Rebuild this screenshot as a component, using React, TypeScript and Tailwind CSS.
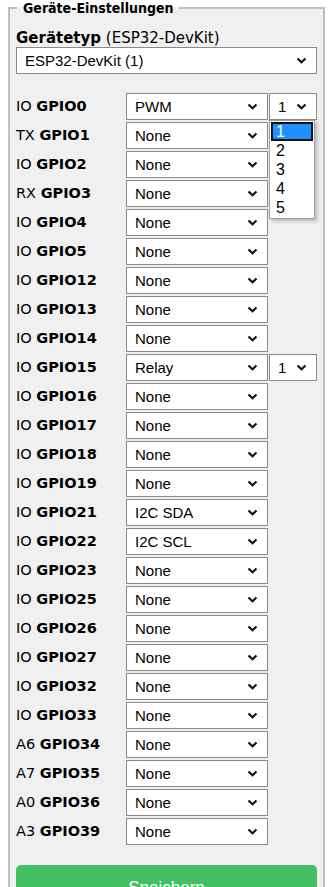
import React from "react";

const pins: [string, string, string, string?][] = [
  ["IO", "GPIO0", "PWM", "1"],
  ["TX", "GPIO1", "None"],
  ["IO", "GPIO2", "None"],
  ["RX", "GPIO3", "None"],
  ["IO", "GPIO4", "None"],
  ["IO", "GPIO5", "None"],
  ["IO", "GPIO12", "None"],
  ["IO", "GPIO13", "None"],
  ["IO", "GPIO14", "None"],
  ["IO", "GPIO15", "Relay", "1"],
  ["IO", "GPIO16", "None"],
  ["IO", "GPIO17", "None"],
  ["IO", "GPIO18", "None"],
  ["IO", "GPIO19", "None"],
  ["IO", "GPIO21", "I2C SDA"],
  ["IO", "GPIO22", "I2C SCL"],
  ["IO", "GPIO23", "None"],
  ["IO", "GPIO25", "None"],
  ["IO", "GPIO26", "None"],
  ["IO", "GPIO27", "None"],
  ["IO", "GPIO32", "None"],
  ["IO", "GPIO33", "None"],
  ["A6", "GPIO34", "None"],
  ["A7", "GPIO35", "None"],
  ["A0", "GPIO36", "None"],
  ["A3", "GPIO39", "None"],
];

function Chevron() {
  return (
    <svg width="11" height="7" viewBox="0 0 11 7" className="shrink-0">
      <path d="M1.5 1.5 L5.5 5.2 L9.5 1.5" fill="none" stroke="#111" strokeWidth="2.2" />
    </svg>
  );
}

function FakeSelect({ value, className }: { value: string; className: string }) {
  return (
    <div
      className={`flex h-[27px] items-center justify-between border border-[#8a8a8a] bg-white pl-[8px] pr-[9px] text-[15px] text-black font-['Liberation_Sans',sans-serif] ${className}`}
    >
      <span className="leading-none">{value}</span>
      <Chevron />
    </div>
  );
}

export default function App() {
  return (
    <div className="relative min-h-[887px] bg-white font-['Verdana','DejaVu_Sans',sans-serif]">
      <fieldset className="mx-[8px] border-2 border-[#c0c0c0] bg-[#f0f0f0] px-[6px] pb-[20px] pt-[14px]">
        <legend className="ml-[1px] px-[6px] text-[14px] font-bold leading-[16px] text-black font-['Tahoma','DejaVu_Sans_Condensed',sans-serif]">
          Geräte-Einstellungen
        </legend>

        <div className="text-[15px] leading-[16px] text-black">
          <span className="font-bold">Gerätetyp</span> (ESP32-DevKit)
        </div>
        <FakeSelect value="ESP32-DevKit (1)" className="mt-[1px] w-[301px]" />

        <div className="mt-[19px] flex flex-col gap-[2px]">
          {pins.map(([pre, name, val, ch]) => (
            <div key={name} className="flex items-center">
              <div className="w-[110px] text-[14.5px] text-black">
                {pre} <span className="font-bold">{name}</span>
              </div>
              <FakeSelect value={val} className="w-[142px]" />
              {ch && <FakeSelect value={ch} className="ml-[1px] w-[48px]" />}
            </div>
          ))}
        </div>

        <button className="mt-[20px] h-[40px] w-[301px] rounded-[5px] bg-[#44bf64] pt-[6px] text-[17px] text-white font-['Liberation_Sans',sans-serif]">
          Speichern
        </button>
      </fieldset>

      <div className="absolute left-[269px] top-[120px] w-[46px] border border-[#a0a0a0] bg-white py-[1px] font-['Liberation_Sans',sans-serif] text-[16px] leading-[19px] text-black shadow-[2px_2px_4px_rgba(0,0,0,0.25)]">
        <div className="mx-[1px] border-2 border-[#111] bg-[#1e90ff] pl-[3px] text-white leading-[15px]">1</div>
        <div className="pl-[6px]">2</div>
        <div className="pl-[6px]">3</div>
        <div className="pl-[6px]">4</div>
        <div className="pl-[6px]">5</div>
      </div>
    </div>
  );
}
